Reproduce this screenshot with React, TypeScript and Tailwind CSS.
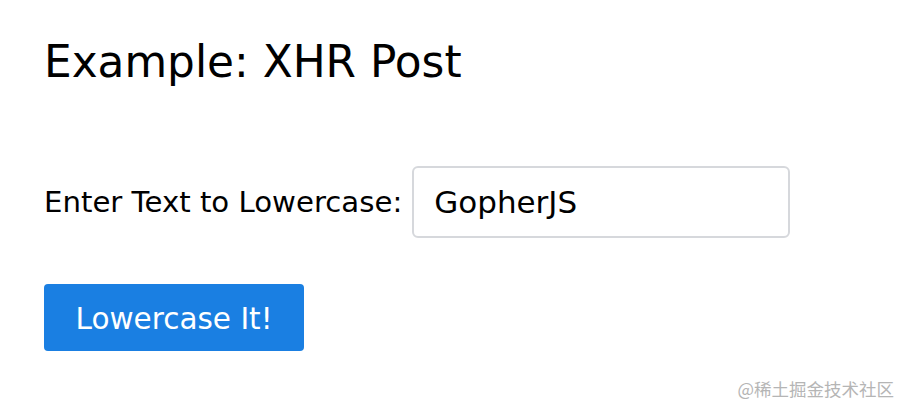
export default function App() {
  return (
    <div className="relative w-[902px] h-[410px] bg-white text-black overflow-hidden" style={{ fontFamily: '"DejaVu Sans", sans-serif' }}>
      <div className="pl-[44px] pt-[33px]">
        <h1 className="text-[43.8px] leading-[58px] font-normal">Example: XHR Post</h1>
        <div className="mt-[75px] flex items-center gap-[10px]">
          <label className="text-[29.2px] leading-[36px]">Enter Text to Lowercase:</label>
          <input
            defaultValue="GopherJS"
            className="w-[378px] h-[72px] rounded-[6px] border-2 border-[#d6d8dc] px-[20px] text-[31px] text-black outline-none"
            style={{ fontFamily: '"DejaVu Sans", sans-serif' }}
          />
        </div>
        <button className="mt-[46px] w-[260px] h-[67px] pt-[3px] rounded-[4px] bg-[#1a7fe2] text-white text-[29.5px]" style={{ fontFamily: '"DejaVu Sans", sans-serif' }}>Lowercase It!</button>
      </div>
      <div className="absolute right-[8px] bottom-[8px] text-[17.5px] text-[#b5b5b5]" style={{ fontFamily: '"Noto Sans CJK SC", sans-serif' }}>@稀土掘金技术社区</div>
    </div>
  );
}
